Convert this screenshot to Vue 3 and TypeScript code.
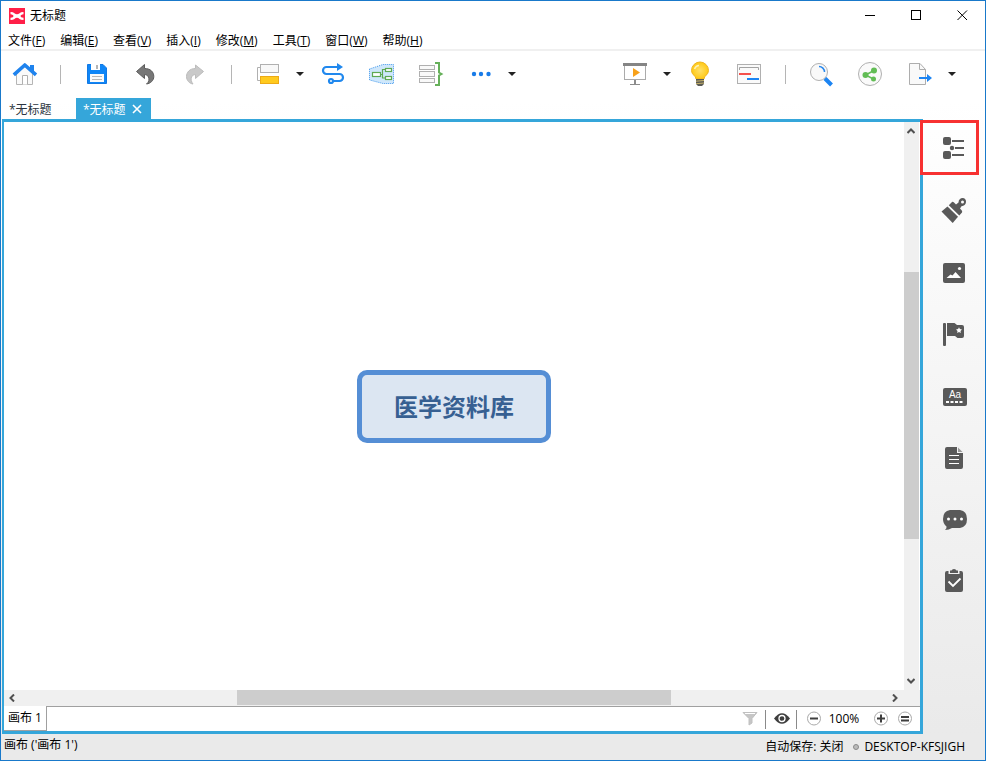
<script setup lang="ts">
import { ref } from 'vue'

interface MenuEntry {
  label: string
  key: string
}

const menus: MenuEntry[] = [
  { label: '文件', key: 'F' },
  { label: '编辑', key: 'E' },
  { label: '查看', key: 'V' },
  { label: '插入', key: 'I' },
  { label: '修改', key: 'M' },
  { label: '工具', key: 'T' },
  { label: '窗口', key: 'W' },
  { label: '帮助', key: 'H' },
]

const activeTab = ref<number>(1)
const zoom = ref<number>(100)
</script>

<template>
  <div class="window">
    <header class="titlebar">
      <svg class="logo" viewBox="0 0 16 16" aria-hidden="true">
        <rect width="16" height="16" fill="#ff1f48" />
        <path d="M1.500 4C5 3.800 6 6.300 8 6.300S11 3.800 14.500 4V6.200C12.500 6.300 11.500 7.200 11.500 8S12.500 9.700 14.500 9.800V12C11 12.200 10 9.700 8 9.700S5 12.200 1.500 12V9.800C3.500 9.700 4.500 8.800 4.500 8S3.500 6.300 1.500 6.200Z" fill="#fff" />
      </svg>
      <h1 class="title">无标题</h1>
      <div class="window-buttons">
        <button type="button" aria-label="最小化">
          <svg viewBox="0 0 11 11"><path d="M0 5.500H10" stroke="#000" /></svg>
        </button>
        <button type="button" aria-label="最大化">
          <svg viewBox="0 0 11 11"><rect x=".5" y=".5" width="9" height="9" fill="none" stroke="#000" /></svg>
        </button>
        <button type="button" aria-label="关闭">
          <svg viewBox="0 0 11 11"><path d="M.5 .5L10 10M10 .5L.5 10" stroke="#000" /></svg>
        </button>
      </div>
    </header>

    <nav class="menubar">
      <button v-for="m in menus" :key="m.key" type="button">{{ m.label }}(<u>{{ m.key }}</u>)</button>
    </nav>

    <div class="toolbar">
      <button class="tool" type="button" aria-label="主页">
        <svg viewBox="0 0 27 27" fill="none">
          <path d="M5.500 12.500L14 5.500L21.500 12V23.500H5.500Z" fill="#fafafa" stroke="#b5b5b5" />
          <path d="M11.500 23.500V14.500H16.500V23.500" fill="#fff" stroke="#b0b0b0" />
          <path d="M19 4H23V11L19 8Z" fill="#1f83ee" />
          <path d="M2.800 13.800L13.800 4L25 13.800" stroke="#1f83ee" stroke-width="3.600" stroke-linejoin="round" />
        </svg>
      </button>
      <span class="divider"></span>
      <button class="tool" type="button" aria-label="保存">
        <svg viewBox="0 0 27 27">
          <path d="M3.500 3.500H19L22.500 7V22.500H3.500Z" fill="#0f86f7" stroke="#1279e4" />
          <path d="M7 3H16V9H7Z" fill="#fff" /><path d="M12 4H14V8H12Z" fill="#b5b5b5" />
          <path d="M6 13H20V21H6Z" fill="#fafafa" />
          <path d="M8 15.500H18M8 18.500H18" stroke="#b7b7b7" />
        </svg>
      </button>
      <button class="tool" type="button" aria-label="撤销">
        <svg viewBox="0 0 27 27">
          <path d="M3.500 10.500L11.500 3.500V7.500C17.500 7.500 20.800 11 20.800 15.500C20.800 19.500 17.500 22.500 13.500 23C16 21 16.500 18.500 15.500 16C14.800 14.500 13.500 13.700 11.500 13.500V17.500Z" fill="#777" stroke="#5c5c5c" />
        </svg>
      </button>
      <button class="tool" type="button" aria-label="重做">
        <svg viewBox="0 0 27 27">
          <path d="M21.500 10.500L13.500 4V7.500C7.500 7.500 4.500 11.500 4.500 15.500C4.500 19.500 7.500 22.500 11 23C9.500 21 8.500 18.500 9.500 16C10.200 14.500 11.500 13.700 13.500 13.500V17.500Z" fill="#c9c9c9" stroke="#bcbcbc" />
        </svg>
      </button>
      <span class="divider"></span>
      <button class="tool" type="button" aria-label="主题">
        <svg viewBox="0 0 27 27" fill="none">
          <path d="M5 6.500H2.500V19.500H5" stroke="#b0b0b0" />
          <rect x="5.500" y="3.500" width="18" height="8" fill="#f8f8f8" stroke="#b0b0b0" />
          <rect x="5.500" y="15.500" width="18" height="7" fill="#ffca1e" stroke="#edaa16" />
        </svg>
      </button>
      <button class="caret" type="button" aria-label="更多主题"><svg viewBox="0 0 8 4"><path d="M0 0H8L4 4Z" /></svg></button>
      <button class="tool" type="button" aria-label="联系">
        <svg viewBox="0 0 27 27" fill="none" stroke="#2088ee" stroke-width="2.200">
          <path d="M18 6H6.500A3.500 3.500 0 0 0 6.500 13H19.500A3.500 3.500 0 0 1 19.500 20H13.500" />
          <path d="M17 2L23 6L17 10Z" fill="#2088ee" stroke="none" />
          <circle cx="11" cy="20" r="2" />
        </svg>
      </button>
      <button class="tool" type="button" aria-label="外框">
        <svg viewBox="0 0 27 27" fill="none">
          <path d="M.5 8L14 3.500H24.500V22.500H14L.5 19Z" fill="#cfe7fb" stroke="#4198ed" stroke-dasharray="1 1" />
          <g stroke="#5fa952" stroke-width="1.200"><path d="M11.500 13.500H13.500M16 8.500H13.500V17H16" />
            <g fill="#fff"><rect x="3.500" y="11.500" width="8" height="4" /><rect x="16.500" y="7.500" width="6" height="3" /><rect x="16.500" y="15.500" width="6" height="3" /></g>
          </g>
        </svg>
      </button>
      <button class="tool" type="button" aria-label="概要">
        <svg viewBox="0 0 27 27" fill="none">
          <g fill="#f9f9f9" stroke="#b0b0b0"><rect x="1.500" y="4.500" width="15" height="4" /><rect x="1.500" y="10.500" width="15" height="5" /><rect x="1.500" y="17.500" width="15" height="4" /></g>
          <path d="M17 2H21V11.500L23.500 13L21 14.500V24H17" stroke="#66b05a" stroke-width="2" />
        </svg>
      </button>
      <button class="tool" type="button" aria-label="更多">
        <svg viewBox="0 0 27 27" fill="#187be8"><circle cx="7" cy="13" r="2.200" /><circle cx="14" cy="13" r="2.200" /><circle cx="21.500" cy="13" r="2.200" /></svg>
      </button>
      <button class="caret" type="button" aria-label="更多选项"><svg viewBox="0 0 8 4"><path d="M0 0H8L4 4Z" /></svg></button>

      <span class="spacer"></span>

      <button class="tool" type="button" aria-label="演示">
        <svg viewBox="0 0 27 27" fill="none">
          <rect x="2.500" y="3.500" width="21" height="15" fill="#fff" stroke="#ababab" />
          <path d="M1 3.500H25" stroke="#858585" stroke-width="3" />
          <path d="M11 7V16L18 11.500Z" fill="#f7a11a" />
          <path d="M13 19V23" stroke="#8c8c8c" stroke-width="2" /><path d="M8 23.500H18" stroke="#8c8c8c" />
        </svg>
      </button>
      <button class="caret" type="button" aria-label="演示选项"><svg viewBox="0 0 8 4"><path d="M0 0H8L4 4Z" /></svg></button>
      <button class="tool" type="button" aria-label="头脑风暴">
        <svg viewBox="0 0 27 27">
          <defs><radialGradient id="bulb"><stop offset="0" stop-color="#ffe06a" /><stop offset="1" stop-color="#ffc914" /></radialGradient></defs>
          <path d="M9 18C9 14.500 4.500 14 4.500 9.500A8.500 8.500 0 0 1 21.500 9.500C21.500 14 17 14.500 17 18Z" fill="url(#bulb)" stroke="#efb522" />
          <path d="M7.500 8Q9 4.500 12 4.500" stroke="#fff3b5" stroke-width="1.500" fill="none" />
          <path d="M9 18H17V23L15 25H11L9 23Z" fill="#5b5b55" /><path d="M9 20.200L17 19.500M9 22.700L17 22" stroke="#c8b36a" />
        </svg>
      </button>
      <button class="tool" type="button" aria-label="甘特图">
        <svg viewBox="0 0 27 27" fill="none">
          <rect x="1.500" y="3.500" width="23" height="19" fill="#fafafa" stroke="#b0b0b0" />
          <path d="M3.500 9V6.500H22.500V9" stroke="#a3a3a3" />
          <path d="M3 13H15" stroke="#f5504c" stroke-width="2" /><path d="M11 18H23" stroke="#1c84f2" stroke-width="2" />
        </svg>
      </button>
      <span class="divider"></span>
      <button class="tool" type="button" aria-label="搜索">
        <svg viewBox="0 0 27 27" fill="none">
          <circle cx="10" cy="11" r="8.500" fill="#f9f9f9" stroke="#b0b0b0" />
          <path d="M10 5.500A5.500 5.500 0 0 1 15.500 11" stroke="#2788ee" stroke-width="1.500" />
          <path d="M16 17.500L22.500 24" stroke="#1c84f2" stroke-width="4" />
        </svg>
      </button>
      <button class="tool" type="button" aria-label="分享">
        <svg viewBox="0 0 27 27">
          <circle cx="12" cy="13" r="11.500" fill="#fafafa" stroke="#b0b0b0" />
          <path d="M16 9.500L7.500 14L15.500 18" fill="none" stroke="#62bd55" stroke-width="1.500" />
          <g fill="#62bd55"><circle cx="16" cy="9.500" r="3" /><circle cx="7.500" cy="14" r="3" /><circle cx="15.500" cy="18" r="2.500" /></g>
        </svg>
      </button>
      <button class="tool" type="button" aria-label="导出">
        <svg viewBox="0 0 27 27" fill="none">
          <path d="M2.500 2.500H13L18.500 8.500V23.500H2.500Z" fill="#f9f9f9" stroke="#adadad" /><path d="M12.500 3V8.500H18.500" stroke="#adadad" />
          <path d="M12 17H21" stroke="#1c84f2" stroke-width="2" /><path d="M20 13L25 17L20 21Z" fill="#1c84f2" />
        </svg>
      </button>
      <button class="caret" type="button" aria-label="导出选项"><svg viewBox="0 0 8 4"><path d="M0 0H8L4 4Z" /></svg></button>
    </div>

    <div class="tabs">
      <button class="tab" :class="{ active: activeTab === 0 }" type="button" @click="activeTab = 0">*无标题</button>
      <button class="tab" :class="{ active: activeTab === 1 }" type="button" @click="activeTab = 1">
        *无标题
        <svg viewBox="0 0 10 10" aria-hidden="true"><path d="M1 1L9 9M9 1L1 9" stroke="#fff" stroke-width="1.600" /></svg>
      </button>
    </div>

    <div class="body">
      <main class="editor">
        <div class="canvas">
          <div class="topic">医学资料库</div>
        </div>
        <div class="vscroll">
          <svg viewBox="0 0 8 6"><path d="M.5 5L4 1.500L7.500 5" /></svg>
          <div class="vtrack"><div class="vthumb"></div></div>
          <svg viewBox="0 0 8 6"><path d="M.5 1L4 4.500L7.500 1" /></svg>
        </div>
        <div class="hscroll">
          <svg viewBox="0 0 6 8"><path d="M5 .5L1.500 4L5 7.500" /></svg>
          <div class="htrack"><div class="hthumb"></div></div>
          <svg viewBox="0 0 6 8"><path d="M1 .5L4.500 4L1 7.500" /></svg>
        </div>
        <div class="sheetbar">
          <button class="sheet" type="button">画布 1</button>
          <div class="sheet-tools">
            <button type="button" aria-label="筛选">
              <svg viewBox="0 0 18 18"><path d="M2 2.500H16L11 8.500V13L8 15V8.500Z" fill="#c6c6c6" stroke="#c0c0c0" /><path d="M4 3.500H14" stroke="#fff" /></svg>
            </button>
            <span class="bar"></span>
            <button type="button" aria-label="显示">
              <svg viewBox="0 0 18 18"><path d="M1 8.500Q9-2 17 8.500Q9 19 1 8.500Z" fill="#3e3e3e" /><circle cx="9" cy="8.500" r="3" fill="none" stroke="#fff" stroke-width="1.300" /></svg>
            </button>
            <span class="bar"></span>
            <button type="button" aria-label="缩小" @click="zoom -= 10">
              <svg viewBox="0 0 18 18"><circle cx="9" cy="8.500" r="6.500" fill="#fff" stroke="#aaa" /><path d="M5 8.500H13" stroke="#3e3e3e" stroke-width="2" /></svg>
            </button>
            <output class="zoom">{{ zoom }}%</output>
            <button type="button" aria-label="放大" @click="zoom += 10">
              <svg viewBox="0 0 18 18"><circle cx="9" cy="8.500" r="6.500" fill="#fff" stroke="#aaa" /><path d="M5 8.500H13M9 4.500V12.500" stroke="#3e3e3e" stroke-width="2" /></svg>
            </button>
            <button class="reset" type="button" aria-label="实际大小" @click="zoom = 100">
              <svg viewBox="0 0 18 18"><circle cx="9" cy="8.500" r="6.500" fill="#fff" stroke="#aaa" /><path d="M5 7H13M5 10.500H13" stroke="#3e3e3e" stroke-width="2" /></svg>
            </button>
          </div>
        </div>
      </main>

      <aside class="side">
        <button class="marked" type="button" aria-label="大纲">
          <svg viewBox="0 0 28 28"><rect x="3" y="3" width="8" height="8" rx="2" /><rect x="3" y="17" width="8" height="8" rx="2" /><circle cx="12" cy="14" r="2.200" /><path d="M12 7H24M15 14H24M12 21H24" stroke="#595959" stroke-width="2" /></svg>
        </button>
        <button type="button" aria-label="格式">
          <svg viewBox="0 0 28 28"><path d="M7.500 10.500L18 20.800L12.700 27L1.500 15.500Z" /><path fill-rule="evenodd" d="M8.800 9.200L12 6Q13 5.500 14 6.500L16 8.500L18.500 6.500C18.500 3.500 20.500 2 22.500 2C25 2 26.200 4 26 6C25.800 8.500 24 10 21.500 10.200L20 12.500L21.800 14.500Q22.500 15.500 22 16.500L19.300 19.500ZM22.500 4.500A1.500 1.500 0 1 0 22.500 7.500A1.500 1.500 0 1 0 22.500 4.500Z" /></svg>
        </button>
        <button type="button" aria-label="图片">
          <svg viewBox="0 0 28 28"><rect x="3" y="5" width="22" height="20" rx="2" /><path d="M6.500 20L10.500 16.500L12.500 17.500L15.500 14L21 20Z" fill="#fff" /><circle cx="19.500" cy="10.500" r="1.600" fill="#fff" /></svg>
        </button>
        <button type="button" aria-label="图标">
          <svg viewBox="0 0 28 28"><rect x="3" y="3" width="3" height="23" rx="1" /><path d="M7 3H14.500L17 5H22Q24 5 24 7V16Q24 18 22 18H17.500L15 16H7Z" /><path d="M19 7.200L19.900 9.100L22 9.400L20.500 10.900L20.800 13L19 12L17.200 13L17.500 10.900L16 9.400L18.100 9.100Z" fill="#fff" /></svg>
        </button>
        <button type="button" aria-label="标签">
          <svg viewBox="0 0 28 28"><rect x="3" y="6" width="24" height="18" rx="2" /><text x="15" y="16" text-anchor="middle" class="aa">Aa</text><path d="M6 20H24" stroke="#fff" stroke-width="2" stroke-dasharray="3 1.500" /></svg>
        </button>
        <button type="button" aria-label="备注">
          <svg viewBox="0 0 28 28"><path d="M7 3H17V9H23V23Q23 25 21 25H7Q5 25 5 23V5Q5 3 7 3Z" /><path d="M18 3.500L22.500 8H18Z" fill="#999" /><path d="M9 11.500H19M9 15.500H19M9 19.500H19" stroke="#fff" /></svg>
        </button>
        <button type="button" aria-label="批注">
          <svg viewBox="0 0 28 28"><path d="M10 4H20Q27 5 27 13Q27 21 20 22H12Q9 24 5 24Q7 22 6.500 20.500Q3 18 3 13Q3 5 10 4Z" /><g fill="#fff"><circle cx="8.500" cy="13" r="1.500" /><circle cx="15" cy="13" r="1.500" /><circle cx="21.500" cy="13" r="1.500" /></g></svg>
        </button>
        <button type="button" aria-label="任务">
          <svg viewBox="0 0 28 28"><path d="M7 3H8.500V6H19.500V3H21Q23 3 23 5V22Q23 24 21 24H7Q5 24 5 22V5Q5 3 7 3Z" /><path d="M10 5V2.500H11.500Q12 1 14 1T16.500 2.500H18V5Z" /><path d="M8.500 13.500L13 18L20.500 10.500" fill="none" stroke="#fff" stroke-width="1.800" /></svg>
        </button>
      </aside>
    </div>

    <footer class="status">
      <span class="sheet-name">画布 ('画布 1')</span>
      <span class="autosave">自动保存: 关闭</span>
      <span class="dot"></span>
      <span>DESKTOP-KFSJIGH</span>
    </footer>
  </div>
</template>

<style>
body {
  margin: 0;
}
</style>

<style scoped>
.window {
  box-sizing: border-box;
  height: 100vh;
  display: flex;
  flex-direction: column;
  border: 1px solid #1979ca;
  background: linear-gradient(#fff 0, #fff 100px, #e9e9e9 100%);
  color: #000;
  font: 12px/16px "Open Sans", "Noto Sans CJK SC", sans-serif;
  overflow: hidden;
}

button {
  margin: 0;
  padding: 0;
  border: 0;
  background: none;
  color: inherit;
  font: inherit;
  white-space: nowrap;
}

svg {
  display: block;
  flex: none;
}

.titlebar {
  display: flex;
  align-items: center;
  height: 29px;
  padding-left: 8px;
  background: #fff;
}

.logo {
  width: 16px;
  height: 16px;
}

.title {
  flex: 1;
  margin: 0 0 0 5px;
  font: inherit;
}

.window-buttons {
  display: flex;
}

.window-buttons button {
  display: flex;
  justify-content: center;
  width: 46px;
}

.window-buttons svg {
  width: 11px;
  height: 11px;
}

.menubar {
  box-sizing: border-box;
  display: flex;
  gap: 15px;
  height: 21px;
  padding: 2px 0 0 7px;
  align-items: center;
  background: #fff;
  border-bottom: 2px solid #f0f0f0;
}

.menubar u {
  text-underline-offset: 1px;
}

.toolbar {
  display: flex;
  align-items: flex-start;
  height: 37px;
  margin-left: -1px;
  padding: 10px 24px 0 0;
}

.tool {
  display: flex;
  justify-content: center;
  width: 49px;
}

.tool svg {
  width: 27px;
  height: 27px;
}

.caret {
  display: flex;
  align-items: center;
  justify-content: center;
  width: 16px;
  height: 26px;
  padding-right: 2px;
}

.caret svg {
  width: 8px;
  height: 4px;
  fill: #222;
}

.divider {
  width: 1px;
  height: 19px;
  margin: 4px 12px 0 11px;
  background: #b5b5b5;
}

.spacer {
  flex: 1;
}

.tabs {
  display: flex;
  height: 21px;
  margin-left: 1px;
}

.tab {
  display: flex;
  align-items: center;
  gap: 6px;
  width: 74px;
  padding: 2px 7px 0;
  color: #2b3440;
}

.tab svg {
  display: none;
  width: 10px;
  height: 10px;
  margin-bottom: 2px;
}

.tab.active {
  width: 75px;
  background: #35a6da;
  color: #fff;
}

.tab.active svg {
  display: block;
}

.body {
  flex: 1;
  display: flex;
  min-height: 0;
}

.editor {
  flex: 1;
  display: grid;
  grid-template-columns: 1fr 16px;
  grid-template-rows: 1fr 16px 25px;
  min-width: 0;
  margin-left: 1px;
  border: 3px solid #35a6da;
  border-left-width: 2px;
  background: #fff;
}

.canvas {
  display: flex;
  align-items: center;
  justify-content: center;
}

.topic {
  padding: 15px 32px 16px;
  border: 5px solid #558ed5;
  border-radius: 10px;
  background: #dce6f2;
  color: #376092;
  font: bold 24px/32px "Noto Sans CJK SC", sans-serif;
}

.vscroll {
  display: flex;
  flex-direction: column;
  align-items: center;
  margin-right: 1px;
  padding: 6px 1px 6px 0;
  background: #f0f0f0;
}

.vscroll svg,
.hscroll svg {
  fill: none;
  stroke: #505050;
  stroke-width: 2;
}

.vscroll svg {
  width: 8px;
  height: 6px;
}

.vtrack {
  flex: 1;
  align-self: stretch;
  margin-right: -1px;
}

.vthumb {
  height: 49%;
  margin-top: 138px;
  background: #cdcdcd;
}

.hscroll {
  grid-column: 1 / 3;
  display: flex;
  align-items: center;
  padding: 0 22px 0 5px;
  background: #f0f0f0;
}

.hscroll svg {
  width: 6px;
  height: 8px;
}

.htrack {
  flex: 1;
  align-self: stretch;
}

.hthumb {
  width: 49.500%;
  height: 15px;
  margin-left: 222px;
  background: #cdcdcd;
}

.sheetbar {
  grid-column: 1 / 3;
  display: flex;
}

.sheet {
  padding: 0 4px;
  border-right: 1px solid #a0a0a0;
  border-bottom: 1px solid #a0a0a0;
}

.sheet-tools {
  flex: 1;
  display: flex;
  align-items: center;
  justify-content: flex-end;
  padding-right: 6px;
  border-top: 1px solid #a0a0a0;
}

.sheet-tools svg {
  width: 18px;
  height: 18px;
}

.bar {
  width: 1px;
  height: 19px;
  margin: 0 7px 0 6px;
  background: #8a8a8a;
}

.bar + button + .bar {
  margin: 0 8px 0 5px;
}

.zoom {
  width: 40px;
  text-align: center;
  margin: 0 8px 0 1px;
}

.reset {
  margin-left: 6px;
}

.side {
  display: flex;
  flex-direction: column;
  align-items: center;
  gap: 34px;
  width: 62px;
  padding-top: 15px;
}

.side button {
  position: relative;
}

.side svg {
  width: 28px;
  height: 28px;
  fill: #595959;
}

.side .aa {
  fill: #fff;
  font: 10px "Liberation Sans", sans-serif;
}

.marked::after {
  content: "";
  position: absolute;
  inset: -14px -11px -13px -20px;
  border: 3px solid #f73131;
}

.status {
  display: flex;
  align-items: center;
  height: 26px;
  padding: 0 20px 0 3px;
  background: #eaeaea;
}

.sheet-name {
  flex: 1;
  padding-bottom: 4px;
}

.dot {
  box-sizing: border-box;
  width: 6px;
  height: 6px;
  margin: 0 5px 0 10px;
  border: 1px solid #8a8a8a;
  border-radius: 50%;
  background: #bbb;
}
</style>
